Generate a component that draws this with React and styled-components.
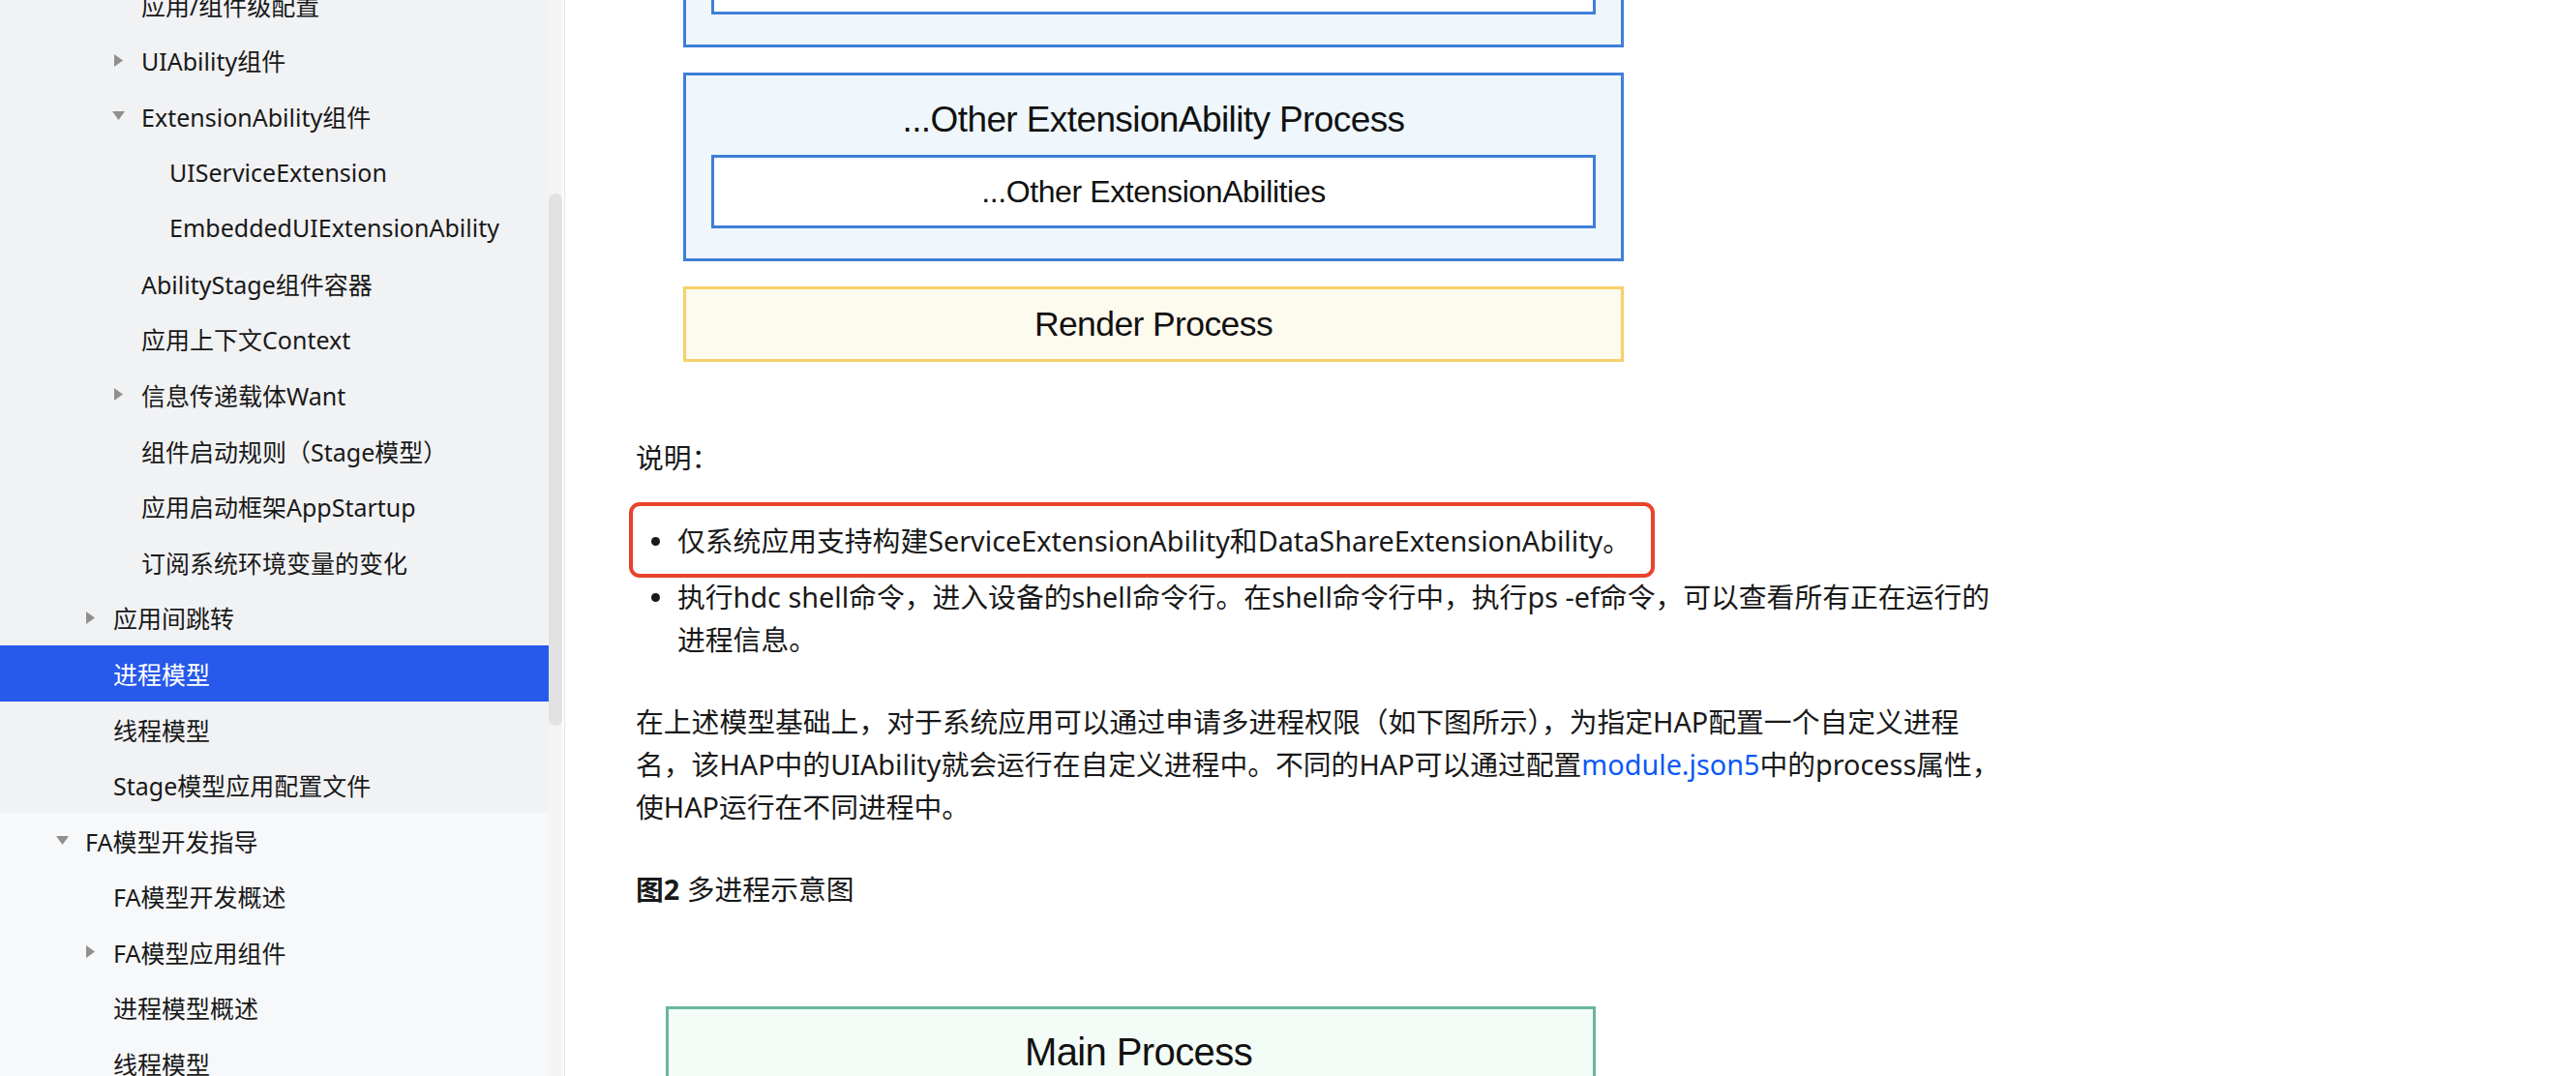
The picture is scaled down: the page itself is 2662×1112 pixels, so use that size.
import React from 'react'
import styled, { createGlobalStyle } from 'styled-components'

const GlobalStyle = createGlobalStyle`
  html, body {
    margin: 0;
    padding: 0;
    background: #fff;
  }
  body {
    font-family: "Noto Sans", "Noto Sans CJK SC", sans-serif;
    color: #191919;
    overflow: hidden;
  }
`

const Page = styled.div`
  display: flex;
  width: 2662px;
  height: 1112px;
  overflow: hidden;
`

const Sidebar = styled.aside`
  display: flex;
  flex: 0 0 584px;
  height: 100%;
  background: #fff;
  border-right: 1px solid #e4e4e4;
  box-sizing: border-box;
`

const Nav = styled.nav`
  flex: 0 0 567px;
  height: 100%;
  overflow: hidden;
  background: #f7f8fa;
`

const NavList = styled.ul`
  list-style: none;
  margin: -24px 0 0;
  padding: 0;
`

const Group = styled.div`
  background: ${p => p.$bg};
`

const Row = styled.li`
  display: flex;
  align-items: center;
  height: 57.6px;
  padding-left: ${p => p.$indent}px;
  font-size: 25px;
  white-space: nowrap;
  color: ${p => (p.$active ? '#fff' : '#191919')};
  background: ${p => (p.$active ? '#2759eb' : 'transparent')};
`

const CaretSlot = styled.span`
  display: flex;
  align-items: center;
  flex: 0 0 30px;
  height: 100%;
  padding-left: ${p => (p.$down ? 0 : 2)}px;
  box-sizing: border-box;
`

const ScrollTrack = styled.div`
  display: flex;
  flex-direction: column;
  flex: 0 0 14px;
  background: #f4f4f5;
`

const ScrollThumb = styled.div`
  margin-top: 200px;
  height: 550px;
  border-radius: 7px;
  background: #e2e2e3;
`

const Gap = styled.div`
  flex: 0 0 2px;
  background: #fff;
`

const Main = styled.main`
  flex: 1;
  padding-left: 73px;
  overflow: hidden;
`

const Figure = styled.div`
  display: flex;
  flex-direction: column;
  gap: 26px;
  width: 972px;
  margin: -146px 0 0 49px;
  font-family: "Liberation Sans", Arial, sans-serif;
  color: #111;
`

const ProcessBox = styled.div`
  display: flex;
  flex-direction: column;
  align-items: stretch;
  gap: 16px;
  padding: 26px 26px 31px;
  border: 3px solid #3f7fd8;
  background: #eff7fc;
`

const ProcessTitle = styled.div`
  height: 40px;
  line-height: 40px;
  text-align: center;
  font-size: 37px;
  letter-spacing: -0.6px;
`

const InnerBox = styled.div`
  display: flex;
  align-items: center;
  justify-content: center;
  height: 76px;
  box-sizing: border-box;
  border: 3px solid #3f7fd8;
  background: #fff;
  font-size: 32px;
  letter-spacing: -0.4px;
`

const RenderBox = styled.div`
  display: flex;
  align-items: center;
  justify-content: center;
  height: 78px;
  box-sizing: border-box;
  border: 3px solid #f6d06a;
  background: #fdfaee;
  font-size: 35.5px;
  letter-spacing: -0.6px;
`

const Text = styled.div`
  width: 1420px;
  font-size: 28.8px;
  line-height: 44px;
`

const NoteTitle = styled.p`
  margin: 77px 0 0;
`

const Bullets = styled.ul`
  list-style: none;
  margin: 42px 0 0;
  padding: 0;
  display: flex;
  flex-direction: column;
  gap: 14px;
`

const Bullet = styled.li`
  position: relative;
  padding-left: 43px;

  &::before {
    content: '';
    position: absolute;
    left: 16px;
    top: 18px;
    width: 9px;
    height: 9px;
    border-radius: 50%;
    background: #191919;
  }

  ${p => p.$marked && `
    &::after {
      content: '';
      position: absolute;
      left: -7px;
      top: -18px;
      width: 1060px;
      height: 78px;
      box-sizing: border-box;
      border: 4px solid #e8432b;
      border-radius: 11px;
    }
  `}
`

const Paragraph = styled.p`
  margin: 41px 0 0;
`

const Link = styled.a`
  color: #0a59f7;
  text-decoration: none;
`

const Caption = styled.p`
  margin: 41px 0 0;

  b {
    font-weight: 700;
  }
`

const MainBox = styled.div`
  width: 961px;
  height: 300px;
  margin: 99px 0 0 31px;
  padding: 19px 0 0 16px;
  box-sizing: border-box;
  border: 3px solid #68b79d;
  background: #f4fcf7;
  font-family: "Liberation Sans", Arial, sans-serif;
  font-size: 40px;
  line-height: 50px;
  letter-spacing: -0.6px;
  text-align: center;
  color: #111;
`

const Caret = ({ down }) => (
  <CaretSlot $down={down}>
    {down ? (
      <svg width="13" height="9" viewBox="0 0 13 9">
        <path d="M0 0 L13 0 L6.5 9 Z" fill="#8f8f8f" />
      </svg>
    ) : (
      <svg width="9" height="13" viewBox="0 0 9 13">
        <path d="M0 0 L9 6.5 L0 13 Z" fill="#8f8f8f" />
      </svg>
    )}
  </CaretSlot>
)

const indentFor = level => 58 + (level - 1) * 29

const stageItems = [
  { level: 3, label: '应用/组件级配置' },
  { level: 3, label: 'UIAbility组件', caret: 'right' },
  { level: 3, label: 'ExtensionAbility组件', caret: 'down' },
  { level: 4, label: 'UIServiceExtension' },
  { level: 4, label: 'EmbeddedUIExtensionAbility' },
  { level: 3, label: 'AbilityStage组件容器' },
  { level: 3, label: '应用上下文Context' },
  { level: 3, label: '信息传递载体Want', caret: 'right' },
  { level: 3, label: '组件启动规则（Stage模型）' },
  { level: 3, label: '应用启动框架AppStartup' },
  { level: 3, label: '订阅系统环境变量的变化' },
  { level: 2, label: '应用间跳转', caret: 'right' },
  { level: 2, label: '进程模型', active: true },
  { level: 2, label: '线程模型' },
  { level: 2, label: 'Stage模型应用配置文件' }
]

const faItems = [
  { level: 1, label: 'FA模型开发指导', caret: 'down' },
  { level: 2, label: 'FA模型开发概述' },
  { level: 2, label: 'FA模型应用组件', caret: 'right' },
  { level: 2, label: '进程模型概述' },
  { level: 2, label: '线程模型' },
  { level: 2, label: 'FA模型应用配置文件' }
]

const NavRows = ({ items }) =>
  items.map((item, i) => (
    <Row key={`${item.label}-${i}`} $indent={indentFor(item.level)} $active={item.active}>
      {item.caret ? <Caret down={item.caret === 'down'} /> : <CaretSlot />}
      {item.label}
    </Row>
  ))

const App = () => {
  return (
    <Page>
      <GlobalStyle />
      <Sidebar>
        <Nav>
          <NavList>
            <Group $bg="#f1f2f4">
              <NavRows items={stageItems} />
            </Group>
            <Group $bg="#f7f8fa">
              <NavRows items={faItems} />
            </Group>
          </NavList>
        </Nav>
        <ScrollTrack>
          <ScrollThumb />
        </ScrollTrack>
        <Gap />
      </Sidebar>

      <Main>
        <Figure>
          <ProcessBox>
            <ProcessTitle>InputMethodExtensionAbility Process</ProcessTitle>
            <InnerBox>InputMethodExtensionAbility</InnerBox>
          </ProcessBox>
          <ProcessBox>
            <ProcessTitle>...Other ExtensionAbility Process</ProcessTitle>
            <InnerBox>...Other ExtensionAbilities</InnerBox>
          </ProcessBox>
          <RenderBox>Render Process</RenderBox>
        </Figure>

        <Text>
          <NoteTitle>说明：</NoteTitle>
          <Bullets>
            <Bullet $marked>
              仅系统应用支持构建ServiceExtensionAbility和DataShareExtensionAbility。
            </Bullet>
            <Bullet>
              执行hdc shell命令，进入设备的shell命令行。在shell命令行中，执行ps -ef命令，可以查看所有正在运行的
              <br />
              进程信息。
            </Bullet>
          </Bullets>

          <Paragraph>
            在上述模型基础上，对于系统应用可以通过申请多进程权限（如下图所示），为指定HAP配置一个自定义进程
            <br />
            名，该HAP中的UIAbility就会运行在自定义进程中。不同的HAP可以通过配置
            <Link href="#">module.json5</Link>
            中的process属性，
            <br />
            使HAP运行在不同进程中。
          </Paragraph>

          <Caption>
            <b>图2</b> 多进程示意图
          </Caption>
        </Text>

        <MainBox>Main Process</MainBox>
      </Main>
    </Page>
  )
}

export default App
